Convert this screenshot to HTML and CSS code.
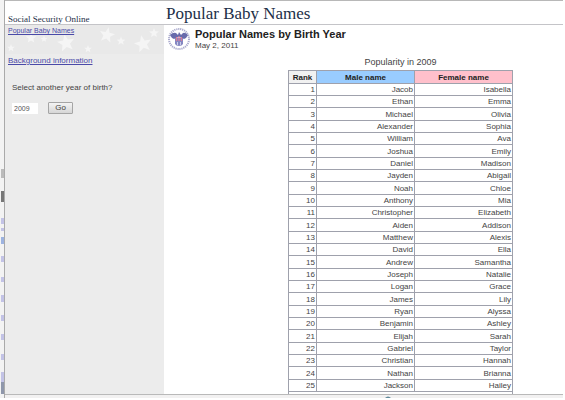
FILE: index.html
```html
<!DOCTYPE html>
<html lang="en">
<head>
  <meta charset="UTF-8">
  <meta name="viewport" content="width=device-width, initial-scale=1.0">
  <title>Popular Baby Names</title>
  <link rel="stylesheet" href="styles.css">
</head>
<body>
  <div class="window">
    <div class="edge">
      <svg width="3" height="396" viewBox="0 0 3 396" aria-hidden="true">
        <g fill="#bbb">
          <rect y="169" width="3" height="9"/>
          <rect y="191" width="3" height="11" fill="#777"/>
        </g>
        <g fill="#c3c3e6">
          <rect y="218" width="3" height="6"/>
          <rect y="228" width="3" height="3"/>
          <rect y="237" width="3" height="7" fill="#9db3e0"/>
          <rect y="256" width="3" height="6"/>
          <rect y="277" width="3" height="5"/>
          <rect y="295" width="3" height="7"/>
          <rect y="315" width="3" height="6"/>
          <rect y="334" width="3" height="6"/>
          <rect y="354" width="3" height="6"/>
          <rect y="372" width="3" height="10"/>
          <rect y="382" width="3" height="12" fill="#8f97ab"/>
        </g>
      </svg>
    </div>
    <div class="page">
      <header class="header">
        <div class="site">Social Security Online</div>
        <h1>Popular Baby Names</h1>
      </header>
      <div class="columns">
        <aside class="sidebar">
          <div class="banner">
            <svg class="stars" width="159" height="29" viewBox="0 0 159 29" aria-hidden="true">
              <defs>
                <path id="star" d="M0-10 2.6-3.4 9.6-3 4.2 1.5 6 8.2 0 4.4-6 8.2-4.2 1.5-9.6-3-2.6-3.4Z"/>
              </defs>
              <g fill="#f5f5f5">
                <use href="#star" transform="translate(6 23) scale(.4)"/>
                <use href="#star" transform="translate(26 13) scale(.55)"/>
                <use href="#star" transform="translate(39 14) scale(.35)"/>
                <use href="#star" transform="translate(61 18) rotate(-10) scale(.9)"/>
                <use href="#star" transform="translate(83 24) scale(.4)"/>
                <use href="#star" transform="translate(102 10) rotate(12) scale(.8)"/>
                <use href="#star" transform="translate(116 16) scale(.45)"/>
                <use href="#star" transform="translate(138 19) rotate(-12) scale(.9)"/>
                <use href="#star" transform="translate(149 8) scale(.5)"/>
              </g>
            </svg>
            <a class="home" href="#">Popular Baby Names</a>
          </div>
          <a class="background" href="#">Background information</a>
          <form class="year-form">
            <label for="year">Select another year of birth?</label>
            <div class="fields">
              <input type="text" id="year" value="2009">
              <button type="button">Go</button>
            </div>
          </form>
        </aside>
        <main class="content">
          <div class="heading">
            <svg class="seal" width="24" height="24" viewBox="0 0 24 24" aria-hidden="true">
              <circle cx="12" cy="12" r="10" fill="none" stroke="#a9a9cc" stroke-width="2" stroke-dasharray="1.2 .8"/>
              <path d="M3 8Q6 5 9 6L11 8 12 5 14 8 16 6Q18 5 21 8L19 11 17 12 15 11 12 10 9 11 7 12 5 11Z" fill="#686bab"/>
              <path d="M8 11H16V17Q15 19 12 19 9 19 8 17Z" fill="#8587c2"/>
              <path d="M9.5 10v4M12 9v5M14.5 10v4" stroke="#dc7c94" stroke-width="1.2"/>
              <path d="M10.5 15v3M13.5 15v3" stroke="#c9cbe8"/>
            </svg>
            <div>
              <h2>Popular Names by Birth Year</h2>
              <p class="date">May 2, 2011</p>
            </div>
          </div>
          <div class="table-area">
            <table class="names">
              <caption>Popularity in 2009</caption>
              <thead>
                <tr><th class="rank">Rank</th><th class="male">Male name</th><th class="female">Female name</th></tr>
              </thead>
              <tbody>
                <tr><td>1</td><td>Jacob</td><td>Isabella</td></tr>
                <tr><td>2</td><td>Ethan</td><td>Emma</td></tr>
                <tr><td>3</td><td>Michael</td><td>Olivia</td></tr>
                <tr><td>4</td><td>Alexander</td><td>Sophia</td></tr>
                <tr><td>5</td><td>William</td><td>Ava</td></tr>
                <tr><td>6</td><td>Joshua</td><td>Emily</td></tr>
                <tr><td>7</td><td>Daniel</td><td>Madison</td></tr>
                <tr><td>8</td><td>Jayden</td><td>Abigail</td></tr>
                <tr><td>9</td><td>Noah</td><td>Chloe</td></tr>
                <tr><td>10</td><td>Anthony</td><td>Mia</td></tr>
                <tr><td>11</td><td>Christopher</td><td>Elizabeth</td></tr>
                <tr><td>12</td><td>Aiden</td><td>Addison</td></tr>
                <tr><td>13</td><td>Matthew</td><td>Alexis</td></tr>
                <tr><td>14</td><td>David</td><td>Ella</td></tr>
                <tr><td>15</td><td>Andrew</td><td>Samantha</td></tr>
                <tr><td>16</td><td>Joseph</td><td>Natalie</td></tr>
                <tr><td>17</td><td>Logan</td><td>Grace</td></tr>
                <tr><td>18</td><td>James</td><td>Lily</td></tr>
                <tr><td>19</td><td>Ryan</td><td>Alyssa</td></tr>
                <tr><td>20</td><td>Benjamin</td><td>Ashley</td></tr>
                <tr><td>21</td><td>Elijah</td><td>Sarah</td></tr>
                <tr><td>22</td><td>Gabriel</td><td>Taylor</td></tr>
                <tr><td>23</td><td>Christian</td><td>Hannah</td></tr>
                <tr><td>24</td><td>Nathan</td><td>Brianna</td></tr>
                <tr><td>25</td><td>Jackson</td><td>Hailey</td></tr>
                <tr><td colspan="3"></td></tr>
              </tbody>
            </table>
          </div>
        </main>
      </div>
      <footer class="status">
        <svg width="6" height="3" viewBox="0 0 6 3" aria-hidden="true"><path d="M0 3Q3 0 6 3Z" fill="#5d8799"/></svg>
      </footer>
    </div>
  </div>
</body>
</html>
```

FILE: styles.css
```css
* {
  box-sizing: border-box;
}
body {
  margin: 0;
  height: 100vh;
  padding: 0 2px 2px 0;
  background-color: #fff;
  color: #444;
  font-family: "Liberation Sans", Arial, sans-serif;
  font-size: 8px;
  line-height: 12px;
}
h1, h2, p {
  margin: 0;
}
a {
  color: #4a4aa8;
}
.window {
  display: flex;
  height: 100%;
  overflow: hidden;
}
.edge {
  flex: none;
  width: 5px;
  padding-left: 1px;
  background-color: #f3f3f3;
  border-right: 1px solid #aaa;
}
.edge svg {
  display: block;
}
.page {
  flex: 1;
  display: flex;
  flex-direction: column;
  min-width: 0;
  border-top: 1px solid #b8b8b8;
}
.header {
  display: flex;
  align-items: flex-end;
  height: 24px;
  border-bottom: 1px solid #c4c4c8;
  font-family: "Liberation Serif", "Times New Roman", serif;
  color: #1c2f48;
}
.site {
  width: 161px;
  padding-left: 3px;
  font-size: 9px;
  line-height: 10px;
}
h1 {
  font-size: 17px;
  font-weight: normal;
  line-height: 20px;
}
.columns {
  flex: 1;
  display: flex;
  min-height: 0;
}
.sidebar {
  flex: none;
  width: 159px;
  background-color: #ececec;
}
.banner {
  position: relative;
  height: 29px;
  padding-left: 3px;
  background-color: #e9e9e9;
}
.stars {
  position: absolute;
  top: 0;
  left: 0;
}
.home {
  position: relative;
  display: block;
  font-size: 7px;
}
.background {
  display: block;
  padding: 1px 3px 0;
}
.year-form {
  padding: 15px 7px;
}
.year-form label {
  display: block;
}
.fields {
  display: flex;
  align-items: center;
  gap: 10px;
  padding-top: 8px;
}
.fields input {
  width: 26px;
  height: 11px;
  padding: 0 2px;
  border: 0;
  background-color: #fff;
  color: #555;
  font-family: inherit;
  font-size: 7px;
}
.fields button {
  width: 25px;
  height: 12px;
  padding: 0;
  border: 1px solid #a5a5a5;
  border-radius: 1px;
  background: linear-gradient(#f4f4f4, #d6d6d6);
  color: #444;
  font-family: inherit;
  font-size: 8px;
  line-height: 10px;
}
.content {
  flex: 1;
  overflow: hidden;
}
.heading {
  display: flex;
  gap: 4px;
  padding: 2px 0 0 3px;
}
.seal {
  flex: none;
}
h2 {
  color: #222;
  font-size: 11px;
  line-height: 14px;
}
.date {
  line-height: 10px;
}
.table-area {
  padding: 5px 0 0 74px;
}
.names {
  width: 225px;
  margin: 0 auto;
  table-layout: fixed;
  border-collapse: collapse;
}
.names caption {
  padding-bottom: 2px;
  font-size: 9px;
}
.names th,
.names td {
  height: 12px;
  padding: 0 1px;
  border: 1px solid #9fa1ac;
  line-height: 11px;
  text-align: right;
}
.names tbody tr:nth-child(3n) td {
  height: 13px;
}
.names th {
  height: 13px;
  color: #222;
  text-align: center;
}
.names .rank {
  width: 28px;
  background-color: #f1f1f1;
}
.names .male {
  background-color: #99ccff;
}
.names .female {
  background-color: #ffc0cb;
}
.status {
  display: flex;
  justify-content: center;
  flex: none;
  height: 4px;
  padding-left: 208px;
  border-top: 1px solid #b9b9b9;
  background-color: #f2f1f1;
}
```
